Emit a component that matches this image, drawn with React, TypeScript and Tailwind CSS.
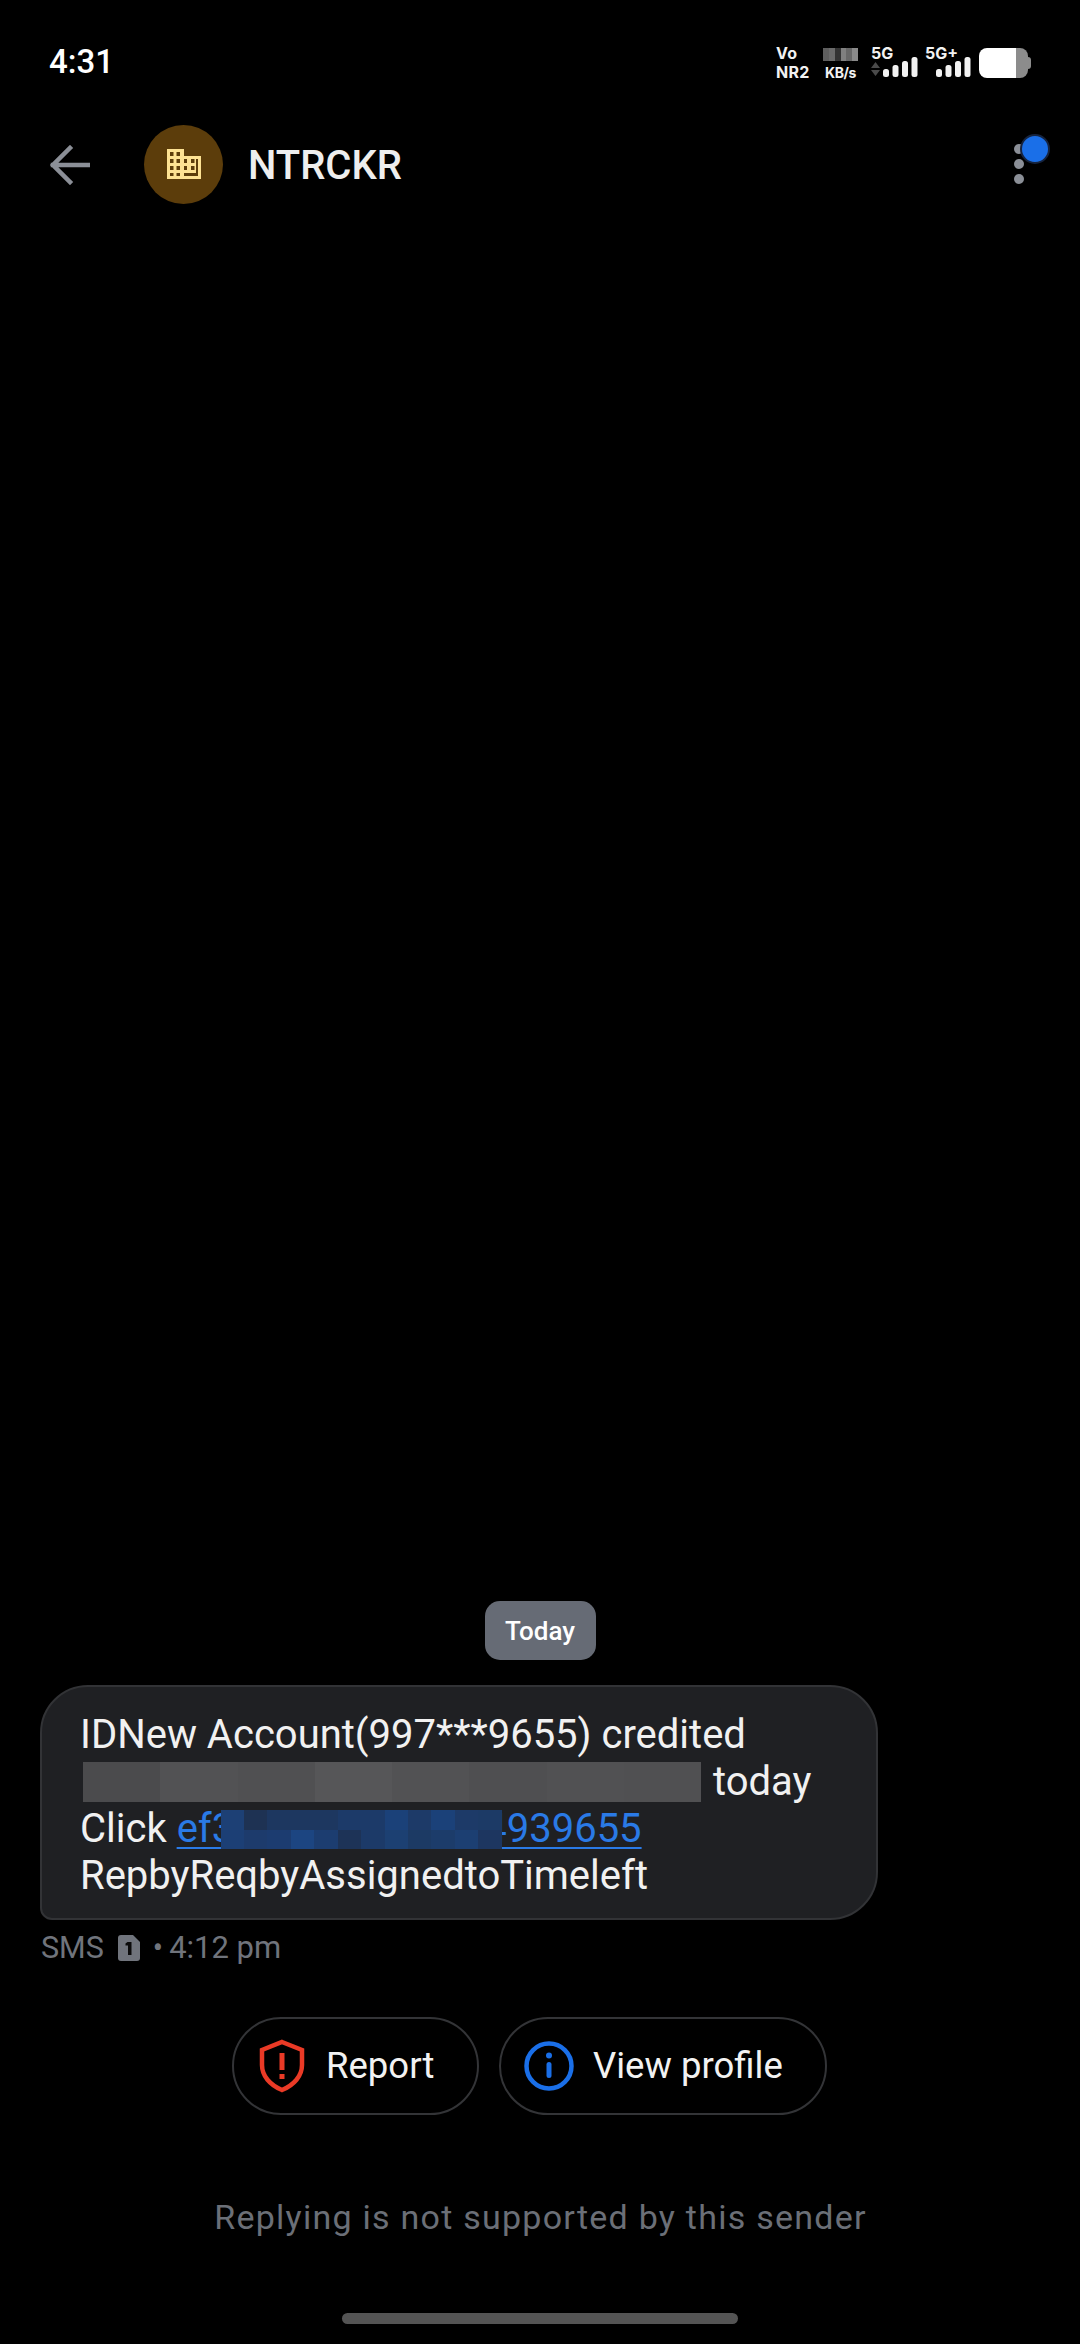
const grayBlocks = ['#4b4b4d', '#525254', '#505052', '#565658', '#525254', '#4f4f51', '#515153', '#505052'];
const blueTop = ['#1d4075', '#1e3253', '#1d3760', '#1d3760', '#1d3760', '#1c3a69', '#1c3a69', '#1b4179', '#1d3a68', '#1b4179', '#1d3a68', '#1c3a66'];
const blueBottom = ['#1c3f75', '#1d3b6c', '#1c3c70', '#1c4581', '#1c3d70', '#1d3357', '#1c3a68', '#1c4072', '#1c3a64', '#1c3c6a', '#1c3f72', '#1d3660'];

function Signal() {
  return (
    <svg width="35" height="20" viewBox="0 0 35 20" fill="#f2f2f2">
      <rect x="0" y="12" width="6" height="8" rx="2.5" />
      <rect x="9.5" y="8" width="6" height="12" rx="2.5" />
      <rect x="19" y="4" width="6" height="16" rx="2.5" />
      <rect x="28.5" y="0" width="6" height="20" rx="2.5" />
    </svg>
  );
}

function StatusIcons() {
  return (
    <div className="flex items-start gap-[14px] mt-[3px] font-['Inter',sans-serif] font-bold text-[#f2f2f2] text-[15px] leading-[20px]">
      <div className="flex flex-col w-[34px] ml-[1px] mr-[-1px] text-[16px] leading-[19px] tracking-[0.3px]">
        <span>Vo</span>
        <span>NR2</span>
      </div>
      <div className="flex flex-col items-center w-[35px] text-[14px] leading-[19px]">
        <div className="grid grid-cols-6 w-[35px] h-[13px] mt-[4px] mb-[2px]">
          <div className="bg-[#5e5e5e]" />
          <div className="bg-[#6a6a6a]" />
          <div className="bg-[#333333]" />
          <div className="bg-[#808080]" />
          <div className="bg-[#686868]" />
          <div className="bg-[#8a8a8a]" />
        </div>
        <span className="tracking-[-0.4px]">KB/s</span>
      </div>
      <div className="flex flex-col w-[47px] ml-[-1px]">
        <span className="text-[16px] leading-[18px]">5G</span>
        <div className="flex items-end h-[20px] mt-[-5px]">
          <svg width="9" height="14" viewBox="0 0 9 14" fill="#4a4a4a" className="mr-[3px] mb-[1px]">
            <path d="M4.5 0 9 6H0zM0 8h9l-4.5 6z" />
          </svg>
          <Signal />
        </div>
      </div>
      <div className="flex flex-col items-end w-[46px] ml-[-7px]">
        <span className="self-start text-[16px] leading-[18px]">5G+</span>
        <div className="mt-[-5px]">
          <Signal />
        </div>
      </div>
      <div className="flex items-center h-[30px] mt-[4px] ml-[-6px]">
        <div className="flex w-[49px] h-[30px] rounded-[8px] overflow-hidden">
          <div className="w-[37px] bg-white" />
          <div className="flex-1 bg-[#8c8c8c]" />
        </div>
        <div className="w-[3px] h-[12px] bg-[#8c8c8c] rounded-r-[3px]" />
      </div>
    </div>
  );
}

export default function App() {
  return (
    <div className="w-[1080px] h-[2344px] bg-black flex flex-col overflow-hidden font-['Roboto',sans-serif] text-white">
      <div className="h-[122px] flex items-center justify-between pl-[49px] pr-[49px]">
        <span className="text-[33px] font-medium leading-none text-white mt-[1px]">4:31</span>
        <StatusIcons />
      </div>

      <div className="h-[84px] flex items-center pl-[50px] pr-[56px]">
        <svg width="40" height="40" viewBox="0 0 40 40" fill="none" stroke="#8b8f97" strokeWidth="4.5" strokeLinecap="square" className="mr-[54px] mt-[1px]">
          <path d="M38 20H3M20 3 3 20l17 17" />
        </svg>
        <div className="w-[79px] h-[79px] rounded-full bg-[#5c3d0b] flex items-center justify-center">
          <svg width="34" height="30" viewBox="0 0 34 30" fill="#fde293" fillRule="evenodd">
            <path d="M0 0h17v7h17v23H0zM3 3v4h3.5V3zm6.5 0v4H13V3zM3 10v4h3.5v-4zm6.5 0v4H13v-4zM3 17v4h3.5v-4zm6.5 0v4H13v-4zM3 24v3h3.5v-3zm6.5 0v3H13v-3zM17 10v4h3v-4zm7 0v4h3.5v-4zM17 17v4h3v-4zm7 0v4h3.5v-4zM17 24v3h14V10h-2v14z" />
          </svg>
        </div>
        <span className="ml-[25px] mt-[4px] text-[40px] font-medium leading-none text-[#eeeeee]">NTRCKR</span>
        <div className="ml-auto relative flex flex-col gap-[5px] w-[10px] items-center">
          <div className="w-[10px] h-[10px] rounded-full bg-[#8b8f97]" />
          <div className="w-[10px] h-[10px] rounded-full bg-[#8b8f97]" />
          <div className="w-[10px] h-[10px] rounded-full bg-[#8b8f97]" />
          <div className="absolute left-[6px] top-[-10px] w-[30px] h-[30px] rounded-full bg-[#1a6fe8] border-2 border-[#16243f]" />
        </div>
      </div>

      <div className="flex-1" />

      <div className="flex justify-center">
        <div className="w-[111px] h-[59px] pt-[1px] rounded-[15px] bg-[#666b75] flex items-center justify-center text-[26px] font-medium text-white">
          Today
        </div>
      </div>

      <div className="mt-[25px] ml-[40px] w-[838px] h-[235px] rounded-t-[48px] rounded-br-[48px] rounded-bl-[12px] bg-[#1f2023] border-2 border-[#323336] pl-[38px] pt-[24px] text-[40px] leading-[47px] text-[#f1f1f1]">
        <div className="whitespace-nowrap">IDNew Account(997***9655) credited</div>
        <div className="flex items-center">
          <div className="flex w-[618px] h-[40px] ml-[3px] mr-[12px]">
            {grayBlocks.map((c, i) => (
              <div key={i} className="flex-1" style={{ backgroundColor: c }} />
            ))}
          </div>
          <span>today</span>
        </div>
        <div className="flex items-center">
          <span>Click&nbsp;</span>
          <span className="relative text-[#2a7ae6] underline underline-offset-[5px] decoration-[2px]">
            ef3
            <span className="inline-block w-[250px]" />
            4939655
            <span className="absolute left-[44px] top-[5px] w-[281px] h-[39px] grid grid-cols-12 grid-rows-2">
              {blueTop.map((c, i) => (
                <span key={i} style={{ backgroundColor: c }} />
              ))}
              {blueBottom.map((c, i) => (
                <span key={i} style={{ backgroundColor: c }} />
              ))}
            </span>
          </span>
        </div>
        <div>RepbyReqbyAssignedtoTimeleft</div>
      </div>

      <div className="mt-[12px] ml-[41px] flex items-center h-[32px] text-[30.5px] text-[#70747c]">
        <span>SMS</span>
        <svg width="22" height="26" viewBox="0 0 22 26" className="ml-[14px]">
          <path d="M3 0h12l7 7v16a3 3 0 0 1-3 3H3a3 3 0 0 1-3-3V3a3 3 0 0 1 3-3z" fill="#70747c" />
          <path d="M9.5 7h4v13h-3.5v-9.5H7.5v-2z" fill="#0b0b0b" />
        </svg>
        <span className="ml-[13px]">•</span>
        <span className="ml-[6px] text-[31px]">4:12 pm</span>
      </div>

      <div className="mt-[53px] flex ml-[232px] gap-[20px] text-[36.5px] text-[#f2f2f2]">
        <div className="w-[247px] h-[98px] rounded-full border-2 border-[#333437] flex items-center pl-[25px]">
          <svg width="46" height="54" viewBox="0 0 46 54" fill="none">
            <path d="M23 3 43 11v15c0 11-8 20-20 25C11 46 3 37 3 26V11z" stroke="#ea3a26" strokeWidth="4.5" strokeLinejoin="miter" />
            <path d="M20.5 14h5v17h-5zM20.5 35h5v5h-5z" fill="#ea3a26" />
          </svg>
          <span className="ml-[21px]">Report</span>
        </div>
        <div className="w-[328px] h-[98px] rounded-full border-2 border-[#333437] flex items-center pl-[23px]">
          <svg width="50" height="50" viewBox="0 0 50 50" fill="none">
            <circle cx="25" cy="25" r="22.5" stroke="#1a6fe8" strokeWidth="4.5" />
            <rect x="22.5" y="21" width="5" height="16" rx="2.5" fill="#1a6fe8" />
            <circle cx="25" cy="14.5" r="3" fill="#1a6fe8" />
          </svg>
          <span className="ml-[19px]">View profile</span>
        </div>
      </div>

      <div className="mt-[83px] text-center text-[34px] leading-[38px] tracking-[1.25px] text-[#6b6f77] pl-[1px] whitespace-nowrap">
        Replying is not supported by this sender
      </div>

      <div className="mt-[77px] mb-[20px] mx-auto w-[396px] h-[11px] rounded-full bg-[#545454]" />
    </div>
  );
}
